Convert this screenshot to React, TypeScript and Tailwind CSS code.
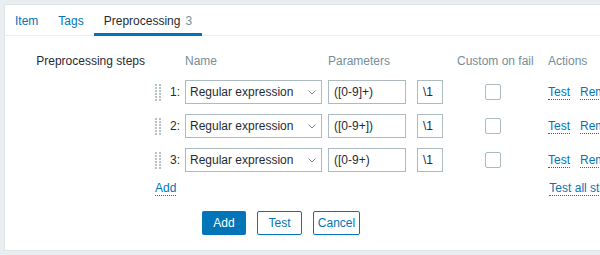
import React from 'react'

const steps = [
  { n: 1, param: '([0-9]+)' },
  { n: 2, param: '([0-9+])' },
  { n: 3, param: '([0-9+)' },
]

const Handle = () => (
  <div className="grid grid-cols-2 gap-x-[2px] gap-y-px w-[6px]">
    {Array.from({ length: 12 }).map((_, i) => (
      <span key={i} className="w-[2px] h-[2px] bg-[#b5c2c8]" />
    ))}
  </div>
)

const Link = ({ children }: { children: React.ReactNode }) => (
  <span className="text-[#0275b8] border-b border-dotted border-[#0275b8] leading-[14px] whitespace-nowrap">
    {children}
  </span>
)

const App = () => {
  return (
    <div
      className="h-[255px] w-[600px] overflow-hidden bg-[#ebeef0] pt-1 pl-1 text-[12px] leading-[14px] text-[#1f2c33]"
      style={{ fontFamily: '"Liberation Sans", Arial, sans-serif' }}
    >
      <div className="w-[640px] h-[247px] border border-[#dfe4e7] bg-white">
        {/* tabs */}
        <div className="flex h-[31px] border-b border-[#ebeef0]">
          <div className="px-[10px] flex items-center h-[31px] text-[#0275b8]">Item</div>
          <div className="px-[10px] flex items-center h-[31px] text-[#0275b8]">Tags</div>
          <div className="px-[10px] flex items-center h-[31px] -mb-px border-b-[3px] border-[#0275b8] pt-[3px]">
            Preprocessing<span className="ml-[5px] text-[#768d99]">3</span>
          </div>
        </div>

        {/* form */}
        <div className="flex pt-[18px]">
          <div className="w-[140px] text-right leading-[14px]">Preprocessing steps</div>
          <div className="pl-[10px] flex flex-col">
            <div className="flex h-[14px] text-[#768d99]">
              <span className="ml-[30px] w-[143px]">Name</span>
              <span className="w-[129px]">Parameters</span>
              <span className="w-[91px]">Custom on fail</span>
              <span>Actions</span>
            </div>
            <div className="flex flex-col gap-[10px] mt-[12px]">
              {steps.map((s) => (
                <div key={s.n} className="flex items-center h-[24px]">
                  <div className="w-[15px]">
                    <Handle />
                  </div>
                  <span className="w-[15px]">{s.n}:</span>
                  <div className="w-[137px] h-[24px] border border-[#acbbc2] flex items-center justify-between pl-[4px] pr-[5px]">
                    <span>Regular expression</span>
                    <svg width="8" height="5" viewBox="0 0 8 5" fill="none">
                      <path d="M0.5 0.5 L4 4 L7.5 0.5" stroke="#768d99" strokeWidth="1" />
                    </svg>
                  </div>
                  <div className="ml-[6px] w-[78px] h-[24px] border border-[#acbbc2] flex items-center pl-[5px]">
                    {s.param}
                  </div>
                  <div className="ml-[11px] w-[26px] h-[24px] border border-[#acbbc2] flex items-center pl-[5px]">
                    \1
                  </div>
                  <div className="ml-[42px] w-[16px] h-[16px] border border-[#acbbc2] rounded-[2px]" />
                  <div className="ml-[47px] flex gap-[10px]">
                    <Link>Test</Link>
                    <Link>Remove</Link>
                  </div>
                </div>
              ))}
            </div>
            <div className="flex mt-[9px]">
              <Link>Add</Link>
              <span className="ml-[373px]">
                <Link>Test all steps</Link>
              </span>
            </div>
          </div>
        </div>

        {/* buttons */}
        <div className="flex gap-[11px] pl-[197px] mt-[15px]">
          <button className="h-[24px] w-[44px] rounded-[2px] bg-[#0275b8] text-white">Add</button>
          <button className="h-[24px] w-[45px] rounded-[2px] border border-[#0275b8] text-[#0275b8] bg-white">
            Test
          </button>
          <button className="h-[24px] w-[47px] rounded-[2px] border border-[#0275b8] text-[#0275b8] bg-white">
            Cancel
          </button>
        </div>
      </div>
    </div>
  )
}

export default App
